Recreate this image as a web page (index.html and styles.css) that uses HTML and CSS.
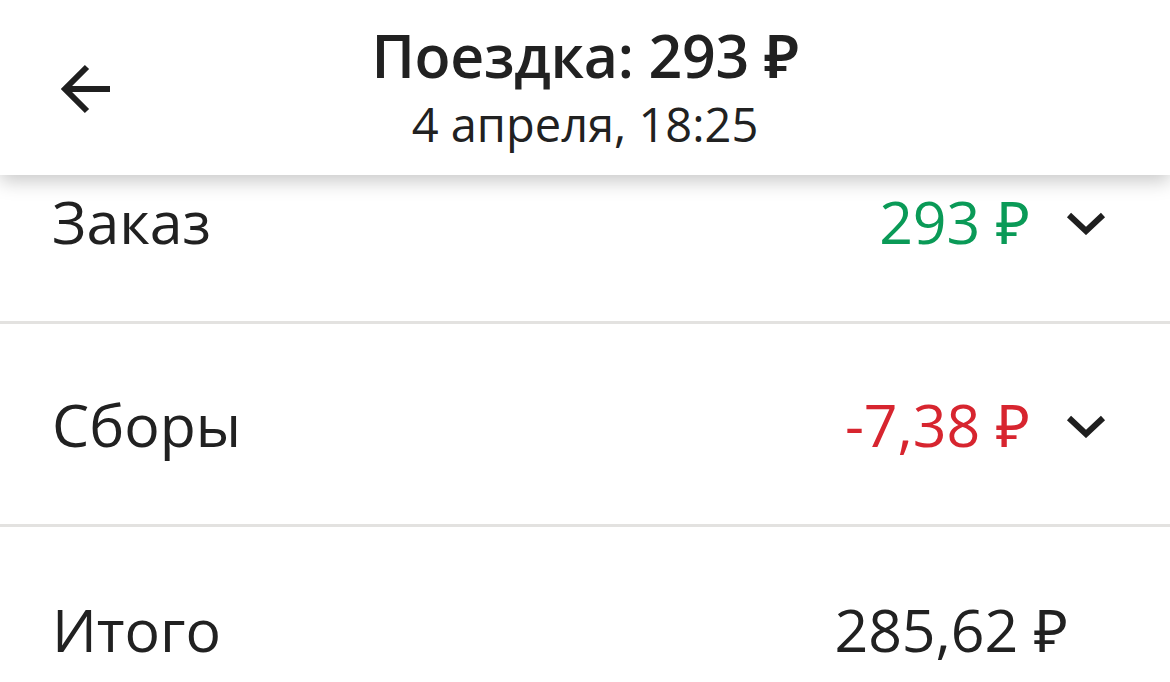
FILE: index.html
```html
<!DOCTYPE html>
<html lang="ru">
<head>
    <meta charset="UTF-8">
    <meta name="viewport" content="width=device-width, initial-scale=1.0">
    <title>Поездка</title>
    <link rel="stylesheet" href="styles.css">
</head>
<body>
<header class="topbar">
    <button class="back" aria-label="Назад">
        <svg width="54" height="54" viewBox="0 0 54 54">
            <path d="M50 27H6M27 5L5 27l22 22" fill="none" stroke="#1f1f1f" stroke-width="6"/>
        </svg>
    </button>
    <div class="title-block">
        <h1 class="title">Поездка: 293 ₽</h1>
        <p class="subtitle">4 апреля, 18:25</p>
    </div>
</header>

<main class="list">
    <div class="row">
        <span class="label">Заказ</span>
        <span class="value income">293 ₽</span>
        <span class="chevron">
            <svg width="40" height="24" viewBox="0 0 40 24"><path d="M3 4l17 16L37 4" fill="none" stroke="#1f1f1f" stroke-width="6"/></svg>
        </span>
    </div>
    <div class="row">
        <span class="label">Сборы</span>
        <span class="value fee">-7,38 ₽</span>
        <span class="chevron">
            <svg width="40" height="24" viewBox="0 0 40 24"><path d="M3 4l17 16L37 4" fill="none" stroke="#1f1f1f" stroke-width="6"/></svg>
        </span>
    </div>
    <div class="row total">
        <span class="label">Итого</span>
        <span class="value">285,62 ₽</span>
    </div>
</main>
</body>
</html>
```

FILE: styles.css
```css
* {
  margin: 0;
  padding: 0;
  box-sizing: border-box;
}

body {
  background: #fff;
  color: #212121;
  font-family: "Open Sans", "Noto Sans", sans-serif;
  overflow: hidden;
}

.topbar {
  position: relative;
  z-index: 1;
  height: 175px;
  background: #fff;
  box-shadow: 0 6px 18px rgba(0, 0, 0, 0.22);
  display: flex;
  justify-content: center;
}

.back {
  position: absolute;
  left: 60px;
  top: 62px;
  border: none;
  background: none;
  display: flex;
}

.title-block {
  text-align: center;
  padding-top: 19px;
}

.title {
  font-size: 59px;
  font-weight: 600;
  line-height: 72px;
  letter-spacing: -0.3px;
}

.subtitle {
  font-size: 47px;
  line-height: 58px;
  margin-top: 4px;
}

.list {
  margin-top: -54px;
}

.row {
  height: 203px;
  border-bottom: 3px solid #e3e2e0;
  display: flex;
  align-items: center;
  padding: 0 60px 0 52px;
}

.row:last-child {
  border-bottom: none;
}

.label {
  flex: 1;
  font-size: 59px;
}

.value {
  font-size: 59px;
}

.income {
  color: #0a9a57;
}

.fee {
  color: #d7252f;
}

.chevron {
  width: 48px;
  margin-left: 32px;
  display: flex;
  justify-content: center;
  padding-top: 4px;
}

.total .value {
  margin-right: 42px;
}
```
